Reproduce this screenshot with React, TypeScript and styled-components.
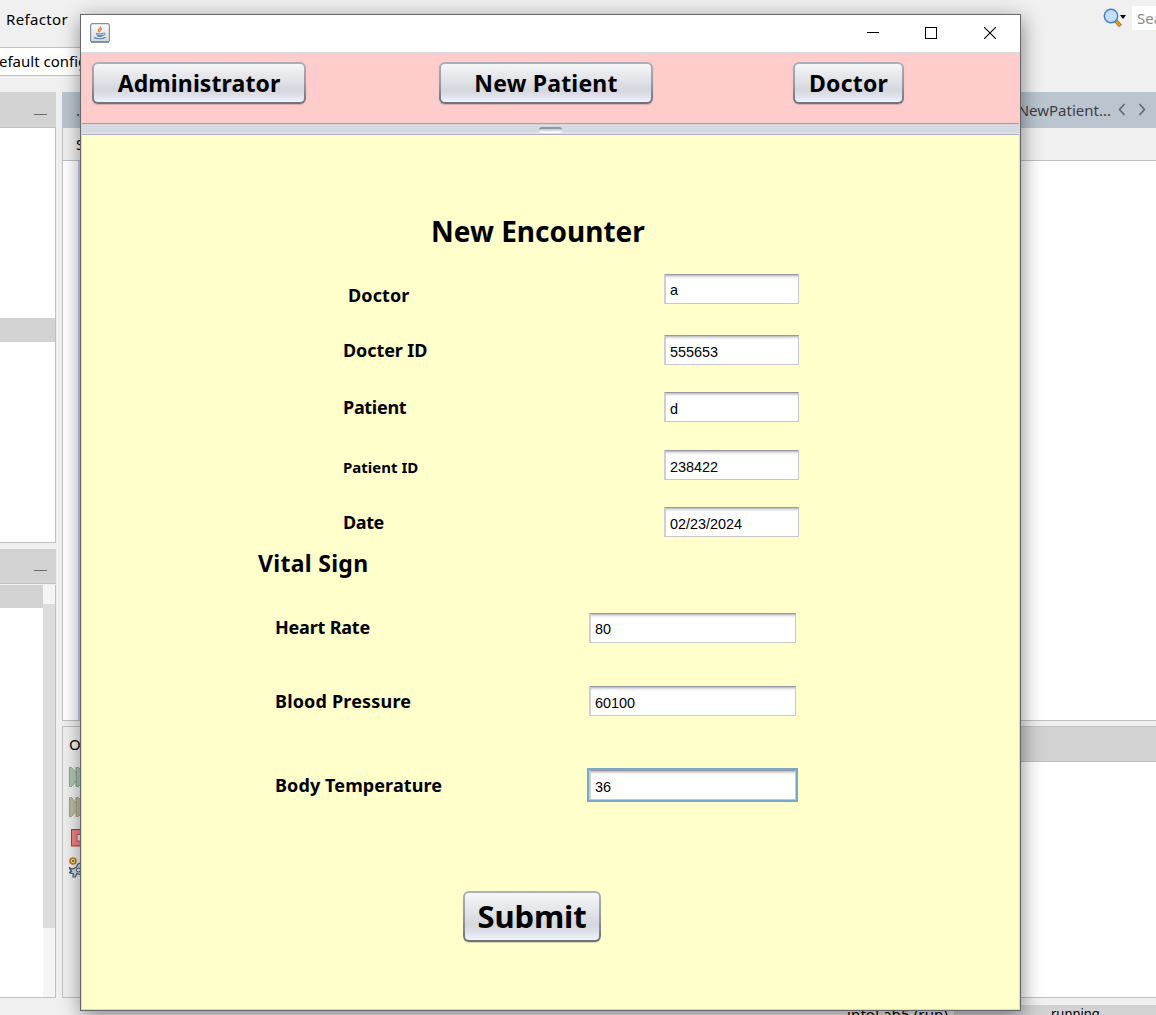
import React from "react";
import styled, { createGlobalStyle, css } from "styled-components";

const GlobalStyle = createGlobalStyle`
  * { box-sizing: border-box; }
  html, body { margin: 0; padding: 0; overflow: hidden; background: #f0f0f0; }
  body { font-family: "Noto Sans", "Open Sans", sans-serif; color: #000; }
`;

/* ---------- IDE in the background ---------- */

const Desktop = styled.div`
  position: relative;
  width: 1156px;
  height: 1015px;
  overflow: hidden;
  background: #f0f0f0;
  display: flex;
  flex-direction: column;
  font-size: 15px;
`;

const MenuBar = styled.div`
  height: 47px;
  flex: none;
  display: flex;
  align-items: flex-start;
  padding: 6px 0 0 6px;
`;

const MenuItem = styled.span<{ $w: number }>`
  width: ${(p) => p.$w}px;
  flex: none;
  line-height: 27px;
  letter-spacing: 0.35px;
  white-space: nowrap;
`;

const IdeTitle = styled.span`
  flex: 1;
  line-height: 27px;
  color: #555;
  letter-spacing: 0.3px;
  white-space: nowrap;
`;

const SearchIconSlot = styled.span`
  width: 29px;
  flex: none;
  height: 24px;
  svg { display: block; }
`;

const SearchBox = styled.div`
  width: 24px;
  height: 24px;
  flex: none;
  background: #fff;
  color: #8b8b8b;
  line-height: 25px;
  padding-left: 5px;
  overflow: hidden;
  white-space: nowrap;
`;

const ConfigBar = styled.div`
  height: 45px;
  flex: none;
  padding-bottom: 16px;
`;

const ConfigSelect = styled.div`
  width: 300px;
  height: 29px;
  background: #fff;
  border: solid #c0c0c0;
  border-width: 1px 0;
  line-height: 27px;
  text-indent: -1px;
  white-space: nowrap;
`;

const Workspace = styled.div`
  height: 906px;
  flex: none;
  display: flex;
  gap: 6px;
`;

const SideColumn = styled.div`
  width: 56px;
  display: flex;
  flex-direction: column;
  gap: 6px;
`;

const SidePanel = styled.div<{ $h: number }>`
  height: ${(p) => p.$h}px;
  display: flex;
  flex-direction: column;
`;

const PanelHeader = styled.div<{ $h: number }>`
  height: ${(p) => p.$h}px;
  flex: none;
  background: #d2d2d2;
  border-bottom: 1px solid #c0c0c0;
  display: flex;
  justify-content: flex-end;
  align-items: flex-end;
  padding: 0 9px 12px 0;
`;

const MinimiseDash = styled.span`
  width: 13px;
  height: 1px;
  background: #6b6b6b;
`;

const TreeBody = styled.div`
  flex: 1;
  background: #fff;
  border: solid #c0c0c0;
  border-width: 0 1px 1px 0;
  padding-top: 190px;
`;

const SelectedRow = styled.div<{ $h: number }>`
  height: ${(p) => p.$h}px;
  background: #d2d2d2;
`;

const NavigatorBody = styled.div`
  flex: 1;
  background: #fff;
  border: solid #c0c0c0;
  border-width: 0 1px 1px 0;
  margin-top: 1px;
  display: flex;
`;

const NavigatorList = styled.div`
  flex: 1;
`;

const ScrollTrack = styled.div`
  width: 12px;
  background: #f5f5f5;
  padding-top: 19px;
`;

const ScrollThumb = styled.div`
  height: 324px;
  background: #dcdcdc;
`;

const MainColumn = styled.div`
  flex: 1;
  display: flex;
  flex-direction: column;
  gap: 5px;
  min-width: 0;
`;

const Editor = styled.div`
  height: 629px;
  display: flex;
  flex-direction: column;
`;

const EditorTabs = styled.div`
  height: 36px;
  flex: none;
  background: #bac5cf;
  display: flex;
  justify-content: space-between;
  line-height: 37px;
  padding-left: 14px;
  color: #333;
`;

const TabEnd = styled.div`
  display: flex;
  align-items: center;
  color: #3e3e3e;
  white-space: nowrap;
  padding-right: 10px;
  svg { margin-left: 7px; }
`;

const EditorTools = styled.div`
  height: 33px;
  flex: none;
  border: solid #c0c0c0;
  border-width: 0 0 1px 1px;
  line-height: 33px;
  padding-left: 13px;
`;

const EditorCode = styled.div`
  flex: 1;
  background: #fff;
  border: solid #c0c0c0;
  border-width: 0 0 1px 1px;
  padding-left: 15px;
`;

const CodeMargin = styled.div`
  width: 2px;
  height: 100%;
  background: #ccccf2;
`;

const Output = styled.div`
  height: 272px;
  display: flex;
  border: solid #c0c0c0;
  border-width: 1px 0 1px 1px;
`;

const OutputTools = styled.div`
  width: 300px;
  padding-left: 6px;
  display: flex;
  flex-direction: column;
  line-height: 35px;
  svg { display: block; flex: none; margin-bottom: 10px; }
`;

const OutputTab = styled.span`
  margin-bottom: 5px;
`;

const StopGroup = styled.div`
  padding-top: 2px;
`;

const OutputMain = styled.div`
  flex: 1;
  background: #fff;
`;

const OutputHeader = styled.div`
  height: 35px;
  background: #d2d2d2;
  border-bottom: 1px solid #c0c0c0;
`;

const StatusBar = styled.div`
  flex: 1;
  display: flex;
  padding: 7px 0 0 847px;
  white-space: nowrap;
`;

const StatusTask = styled.span`
  width: 107px;
  line-height: 18px;
  letter-spacing: 0.15px;
`;

const StatusProgress = styled.span`
  flex: 1;
  height: 20px;
  background: #d2d2d2;
  padding-left: 97px;
  font-size: 13px;
  line-height: 17px;
`;

/* ---------- Application window ---------- */

const Window = styled.div`
  position: absolute;
  left: 80px;
  top: 14px;
  width: 941px;
  height: 997px;
  border: 1px solid #66676a;
  background: #fff;
  box-shadow: 1px 5px 19px rgba(0, 0, 0, 0.45);
  display: flex;
  flex-direction: column;
`;

const TitleBar = styled.div`
  height: 37px;
  flex: none;
  display: flex;
  align-items: center;
  padding: 0 24px 1px 9px;
`;

const WindowControls = styled.div`
  margin-left: auto;
  display: grid;
  grid-template-columns: 58px 59px 12px;
  svg { display: block; }
`;

const Content = styled.div`
  flex: 1;
  display: flex;
  flex-direction: column;
  border: 1px solid #d6d9df;
`;

const NavBar = styled.div`
  height: 70px;
  flex: none;
  display: flex;
  align-items: flex-start;
  padding: 9px 0 0 10px;
  background: #ffcccc;
`;

const NimbusButton = styled.button<{ $w: number; $h: number; $size: number; $left?: number; $ls?: number }>`
  width: ${(p) => p.$w}px;
  height: ${(p) => p.$h}px;
  margin: 0 0 0 ${(p) => p.$left ?? 0}px;
  padding: 0;
  flex: none;
  border: 2px solid transparent;
  border-radius: 6px;
  background:
    linear-gradient(#f6f7f9 0%, #e9ebee 22%, #dfe1e6 48%, #d4d7de 66%, #dbdee5 80%, #eff2fa 100%) padding-box,
    linear-gradient(#aeb0b5, #989ba2 50%, #6f7177) border-box;
  box-shadow: 0 1px 1px rgba(80, 80, 90, 0.25);
  font: 700 ${(p) => p.$size}px/1 "Noto Sans", "Open Sans", sans-serif;
  letter-spacing: ${(p) => p.$ls ?? 0}px;
  color: #000;
  white-space: nowrap;
`;

const NavButton = styled(NimbusButton)`
  padding-top: 1px;
`;

const Divider = styled.div`
  height: 12px;
  flex: none;
  display: flex;
  justify-content: center;
  padding-top: 3px;
  border: solid #9da0a8;
  border-width: 1px 0;
  border-bottom-color: #a9adbd;
  background: linear-gradient(#d6d9df 80%, #e6e9ef);
`;

const Grip = styled.span`
  width: 23px;
  height: 6px;
  border-radius: 3px;
  border-top: 2px solid #92959d;
  border-bottom: 2px solid #f6f7fa;
  background: #d0d3d9;
`;

const Form = styled.form`
  flex: 1;
  background: #ffffcc;
  padding-top: 76px;
`;

const Heading = styled.h1`
  margin: 0 0 0 349px;
  font-size: 28px;
  line-height: 40px;
  font-weight: 700;
`;

const SectionTitle = styled.h2`
  margin: 12px 0 0 176px;
  font-size: 23px;
  line-height: 28px;
  font-weight: 700;
  letter-spacing: 0.3px;
`;

const FormRow = styled.div<{ $gap: number; $labels: number; $field: number }>`
  display: grid;
  grid-template-columns: ${(p) => p.$labels}px ${(p) => p.$field}px;
  height: 30px;
  margin-top: ${(p) => p.$gap}px;
`;

const Label = styled.label<{ $indent: number; $drop?: number; $small?: boolean; $ls?: number }>`
  padding-left: ${(p) => p.$indent}px;
  margin-top: ${(p) => p.$drop ?? 0}px;
  font-size: ${(p) => (p.$small ? 15 : 18)}px;
  font-weight: 700;
  line-height: 30px;
  letter-spacing: ${(p) => p.$ls ?? 0.1}px;
  white-space: nowrap;
`;

const Field = styled.input<{ $active?: boolean; $lift?: boolean }>`
  width: 100%;
  height: 30px;
  margin: 0;
  padding: ${(p) => (p.$lift ? 2 : 4)}px 0 0 4px;
  border: solid;
  border-width: 1px 1px 1px 2px;
  border-color: #97979d #c6c6cb #c6c6cb #cfcfd2;
  border-radius: 0;
  outline: none;
  background: linear-gradient(#b9b9bd, #ececed 2px, #fff 4px);
  font: 14.4px "Liberation Sans", Arial, sans-serif;
  color: #000;
  ${(p) =>
    p.$active &&
    css`
      box-shadow: 0 0 0 2px #7aa8cd;
    `}
`;

/* ---------- Drawings ---------- */

const JavaIcon = () => (
  <svg width="20" height="20" viewBox="0 0 20 20">
    <defs>
      <linearGradient id="cupTile" x1="0" y1="0" x2="0" y2="1">
        <stop offset="0" stopColor="#fdfdfd" />
        <stop offset="1" stopColor="#d3d8dd" />
      </linearGradient>
    </defs>
    <rect x="0.6" y="0.6" width="18.8" height="18.4" rx="1.8" fill="url(#cupTile)" stroke="#8193a3" strokeWidth="1.2" />
    <path d="M1 19h18" stroke="#55697a" strokeWidth="1" />
    <path d="M10.600 3.500c.8 1.800-2.800 2.500-2.300 4.200.2.700.8 1 1.200 1.600M12 5.800c-2 .8-2.300 1.700-1.600 2.700" fill="none" stroke="#ee8a3a" strokeWidth="1.500" />
    <path d="M5.800 9.800c2.400 1 5.400 1 7.600 0l-.8 3.500c-1.700.8-4 .8-5.600 0z" fill="#5c83a3" />
    <path d="M6.500 11.600h6.500" stroke="#dbe5ec" strokeWidth="0.700" />
    <path d="M13.400 10.200c2.600-.6 2.200 2-.6 2.500" fill="none" stroke="#5c83a3" strokeWidth="1" />
    <path d="M4 14.500c2.500 1.700 8.500 1.700 11.600-.2" fill="none" stroke="#5c83a3" strokeWidth="1.200" />
  </svg>
);

const MinimiseIcon = () => (
  <svg width="12" height="12" viewBox="0 0 12 12" shapeRendering="crispEdges">
    <path d="M0 5.500h12" stroke="#000" />
  </svg>
);

const MaximiseIcon = () => (
  <svg width="12" height="12" viewBox="0 0 12 12" shapeRendering="crispEdges">
    <rect x="0.500" y="0.500" width="11" height="11" fill="none" stroke="#000" />
  </svg>
);

const CloseIcon = () => (
  <svg width="12" height="12" viewBox="0 0 12 12">
    <path d="M0 0l12 12M12 0L0 12" stroke="#000" strokeWidth="1.100" />
  </svg>
);

const SearchIcon = () => (
  <svg width="25" height="22" viewBox="0 0 25 22">
    <path d="M12.500 14.500l5 5.500" stroke="#a4700d" strokeWidth="4" />
    <path d="M12.500 14.500l4.600 5" stroke="#e9a01c" strokeWidth="2" />
    <circle cx="8" cy="10" r="6.700" fill="#c4defb" stroke="#3b82ca" strokeWidth="1.400" />
    <path d="M17 9h6L20 13z" fill="#000" />
  </svg>
);

const ChevronPair = () => (
  <svg width="28" height="14" viewBox="0 0 28 14" fill="none" stroke="#5e6367" strokeWidth="1.500">
    <path d="M6.500 1L1.500 6.500l5 5.500M21.500 1L26.500 6.500l-5 5.500" />
  </svg>
);

const RerunIcon = ({ fill, line }: { fill: string; line: string }) => (
  <svg width="24" height="20" viewBox="0 0 24 20" fill={fill} stroke={line}>
    <path d="M0.500 0.500h2L7 6V0.500h2.500L16 7V13L9.500 19.500H7V14l-4.500 5.500h-2z" />
    <path d="M7.500 0.500v19" />
  </svg>
);

const StopIcon = () => (
  <svg width="22" height="18" viewBox="0 0 22 18">
    <rect x="2.500" y="0.500" width="17" height="16.500" fill="#f08480" stroke="#b83a38" />
    <rect x="8" y="5.500" width="7" height="6.500" fill="#f1e6e6" stroke="#cc5654" />
  </svg>
);

const SettingsIcon = () => (
  <svg width="22" height="21" viewBox="0 0 22 21">
    <path d="M0 10.500l3 1.500 4-1.500L9 7l3-1v12l-4-1.500L6.500 20H4l.5-3L0 15.500l2.500-1z" fill="#c9d6e1" stroke="#43566a" strokeWidth="1.200" />
    <circle cx="9.500" cy="13" r="2" fill="#f2f2f2" stroke="#43566a" />
    <circle cx="4" cy="4" r="3" fill="#f4dfab" stroke="#b27c18" strokeWidth="1.700" />
    <circle cx="4" cy="4" r="1.100" fill="#80560b" />
  </svg>
);

/* ---------- Data ---------- */

const menus: [string, number][] = [
  ["Refactor", 81],
  ["Run", 49],
  ["Debug", 67],
  ["Profile", 68],
  ["Team", 60],
  ["Tools", 59],
  ["Window", 81],
  ["Help", 207],
];

const details = [
  { label: "Doctor", value: "a", gap: 23, indent: 266, drop: 6, lift: true },
  { label: "Docter ID", value: "555653", gap: 31, indent: 261, ls: -0.1 },
  { label: "Patient", value: "d", gap: 27, indent: 261, ls: -0.3 },
  { label: "Patient ID", value: "238422", gap: 28, indent: 261, drop: 2, ls: 0, small: true },
  { label: "Date", value: "02/23/2024", gap: 27, indent: 261, ls: -0.4 },
];

const vitals = [
  { label: "Heart Rate", value: "80", gap: 36, drop: -1, ls: -0.2, lift: true },
  { label: "Blood Pressure", value: "60100", gap: 43, ls: 0.18 },
  { label: "Body Temperature", value: "36", gap: 54, ls: 0.1, active: true },
];

const Ide = () => (
  <>
    <MenuBar>
      {menus.map(([name, width]) => (
        <MenuItem key={name} $w={width}>{name}</MenuItem>
      ))}
      <IdeTitle>infotalDoctorlab - NewDoctor - IDE 20</IdeTitle>
      <SearchIconSlot><SearchIcon /></SearchIconSlot>
      <SearchBox>Sea</SearchBox>
    </MenuBar>
    <ConfigBar>
      <ConfigSelect>efault config&gt;</ConfigSelect>
    </ConfigBar>
    <Workspace>
      <SideColumn>
        <SidePanel $h={451}>
          <PanelHeader $h={36}><MinimiseDash /></PanelHeader>
          <TreeBody><SelectedRow $h={24} /></TreeBody>
        </SidePanel>
        <SidePanel $h={449}>
          <PanelHeader $h={35}><MinimiseDash /></PanelHeader>
          <NavigatorBody>
            <NavigatorList><SelectedRow $h={23} /></NavigatorList>
            <ScrollTrack><ScrollThumb /></ScrollTrack>
          </NavigatorBody>
        </SidePanel>
      </SideColumn>
      <MainColumn>
        <Editor>
          <EditorTabs>
            <span>...</span>
            <TabEnd>NewPatient...<ChevronPair /></TabEnd>
          </EditorTabs>
          <EditorTools>Source</EditorTools>
          <EditorCode><CodeMargin /></EditorCode>
        </Editor>
        <Output>
          <OutputTools>
            <OutputTab>Output</OutputTab>
            <RerunIcon fill="#b2c6b2" line="#86a58a" />
            <RerunIcon fill="#bcbca2" line="#a0a084" />
            <StopGroup>
              <StopIcon />
              <SettingsIcon />
            </StopGroup>
          </OutputTools>
          <OutputMain><OutputHeader /></OutputMain>
        </Output>
      </MainColumn>
    </Workspace>
    <StatusBar>
      <StatusTask>infoLab5 (run)</StatusTask>
      <StatusProgress>running...</StatusProgress>
    </StatusBar>
  </>
);

export default function App() {
  return (
    <Desktop>
      <GlobalStyle />
      <Ide />
      <Window>
        <TitleBar>
          <JavaIcon />
          <WindowControls>
            <MinimiseIcon />
            <MaximiseIcon />
            <CloseIcon />
          </WindowControls>
        </TitleBar>
        <Content>
          <NavBar>
            <NavButton $w={214} $h={42} $size={23} $ls={0.1}>Administrator</NavButton>
            <NavButton $w={214} $h={42} $size={23} $ls={0.2} $left={133}>New Patient</NavButton>
            <NavButton $w={111} $h={42} $size={23} $ls={0.2} $left={140}>Doctor</NavButton>
          </NavBar>
          <Divider><Grip /></Divider>
          <Form onSubmit={(e) => e.preventDefault()}>
            <Heading>New Encounter</Heading>
            {details.map((d) => (
              <FormRow key={d.label} $gap={d.gap} $labels={582} $field={135}>
                <Label $indent={d.indent} $drop={d.drop} $small={d.small} $ls={d.ls}>{d.label}</Label>
                <Field defaultValue={d.value} $lift={d.lift} />
              </FormRow>
            ))}
            <SectionTitle>Vital Sign</SectionTitle>
            {vitals.map((v) => (
              <FormRow key={v.label} $gap={v.gap} $labels={507} $field={207}>
                <Label $indent={193} $drop={v.drop} $ls={v.ls}>{v.label}</Label>
                <Field defaultValue={v.value} $active={v.active} $lift={v.lift} />
              </FormRow>
            ))}
            <FormRow $gap={91} $labels={381} $field={138}>
              <span />
              <NimbusButton type="submit" $w={138} $h={51} $size={31} $ls={-0.15}>Submit</NimbusButton>
            </FormRow>
          </Form>
        </Content>
      </Window>
    </Desktop>
  );
}
